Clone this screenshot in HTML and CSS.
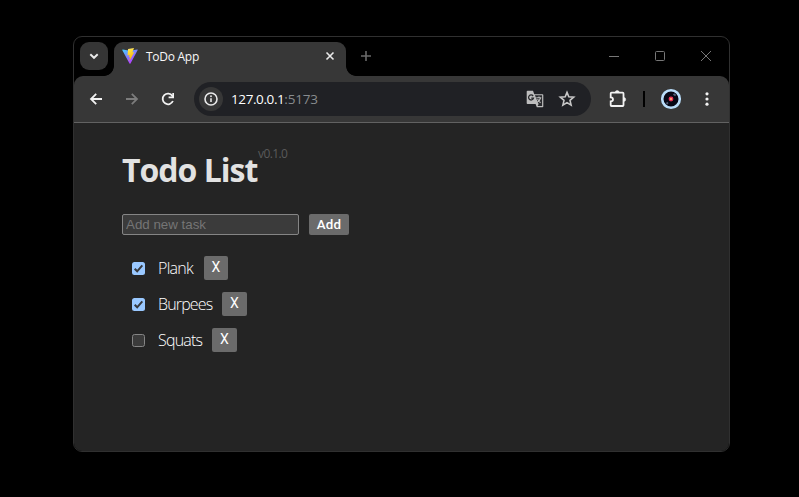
FILE: index.html
```html
<!DOCTYPE html>
<html lang="en">
<head>
<meta charset="utf-8">
<title>ToDo App</title>
<link rel="stylesheet" href="styles.css">
</head>
<body>
<div class="window">
  <div class="tabstrip">
    <div class="tab-search"><svg width="28" height="28" viewBox="0 0 28 28"><path d="M10.3 12.2l3.7 3.6 3.7-3.6" class="line bright w2"/></svg></div>
    <div class="tab">
      <svg class="favicon" width="16" height="16" viewBox="0 0 16 16">
        <defs>
          <linearGradient id="a" x1="0" y1="0" x2=".6" y2="1"><stop offset="0" stop-color="#41d1ff"/><stop offset="1" stop-color="#bd34fe"/></linearGradient>
          <linearGradient id="b" x1=".4" y1="0" x2=".6" y2="1"><stop offset="0" stop-color="#ffea83"/><stop offset=".2" stop-color="#ffdd35"/><stop offset="1" stop-color="#ffa800"/></linearGradient>
        </defs>
        <path d="M15.7 2.1L8.5 15.5Q8 16.2 7.5 15.5L.2 2.1Q.1 1.4.8 1.4L8 2.8l7.2-1.4q.7 0 .5.7z" fill="url(#a)"/>
        <path d="M12 0L6.1 1.1 5.5 7.4l2-.4-.6 2.5 1.2-.4-.8 4.1 5-9.2-2 .4z" fill="url(#b)"/>
      </svg>
      <span class="tab-title">ToDo App</span>
      <svg class="tab-close" width="16" height="16" viewBox="0 0 16 16"><path d="M4.5 4.5l7 7m0-7l-7 7" class="line bright w16"/></svg>
    </div>
    <svg class="new-tab" width="16" height="16" viewBox="0 0 16 16"><path d="M8 3v10M3 8h10" class="line dim w16"/></svg>
    <div class="controls">
      <svg width="46" height="28" viewBox="0 0 46 28"><path d="M18 14.5h10" class="line gray"/></svg>
      <svg width="46" height="28" viewBox="0 0 46 28"><rect x="18.5" y="9.5" width="9" height="9" rx="1" class="line gray"/></svg>
      <svg width="46" height="28" viewBox="0 0 46 28"><path d="M18 9l10 10m0-10L18 19" class="line gray"/></svg>
    </div>
  </div>
  <div class="toolbar">
    <svg width="36" height="36" viewBox="0 0 36 36"><path d="M24 18H13m5.2-5.2L13 18l5.2 5.2" class="line white w18"/></svg>
    <svg width="36" height="36" viewBox="0 0 36 36"><path d="M12 18h11m-5.2-5.2L23 18l-5.2 5.2" class="line muted w18"/></svg>
    <svg width="36" height="36" viewBox="0 0 36 36"><path d="M22.9 20a5.3 5.3 0 1 1-.5-5l.7 1" class="line white w18"/><path d="M24 12v5.2h-5.4v-1.7h3.7V12z" fill="#f2f2f2"/></svg>
    <div class="address">
      <div class="site-info"><svg width="24" height="24" viewBox="0 0 24 24"><circle cx="12" cy="12" r="6" class="line bright w16"/><path d="M12 11.3v3.7" class="line bright w16"/><circle cx="12" cy="9.2" r=".95" fill="#e3e3e3"/></svg></div>
      <div class="url"><span class="host">127.0.0.1</span><span class="port">:5173</span></div>
      <svg class="translate" width="18" height="18" viewBox="0 0 18 18">
        <path d="M1.5.8H7l1.3 3.4h8.2q.8 0 .8.8v11.5q0 .8-.8.8h-5.7L9.6 14H1.5q-.8 0-.8-.8V1.6q0-.8.8-.8z" fill="#bdbdbd"/>
        <path d="M8.9 5.3h7.2v10.8h-4.5l1-2.1L8.9 5.3z" fill="#292a2d"/>
        <path d="M7.1 6a2.5 2.5 0 1 0 .4 2.1H5.2" fill="none" stroke="#292a2d" stroke-width="1.3"/>
        <path d="M10.3 7.8h5M13 6.6v1.2M14.5 8q-.7 2.7-3 4m0-2.8l3 3.6" fill="none" stroke="#bdbdbd" stroke-width="1.1"/>
      </svg>
      <svg class="star" width="18" height="18" viewBox="0 0 18 18"><path d="M9 2.4l1.8 4.4 4.9.4-3.7 3.2 1.1 4.7L9 12.6l-4.1 2.5L6 10.4 2.3 7.2l4.9-.4z" class="line star-line"/></svg>
    </div>
    <svg class="extensions" width="36" height="36" viewBox="0 0 36 36"><path d="M11.6 11.7h11.1q.8 0 .8.8v11.7q0 .8-.8.8H11.5q-.8 0-.8-.8v-3.8q2.3-.2 2.3-2t-2.3-2v-3.9q0-.8.9-.8z" class="line white w18"/><path d="M15.2 11.5a2 2 0 0 1 4 0zM23.7 16.4a2 2 0 0 1 0 4z" fill="#f2f2f2" stroke="#f2f2f2" stroke-width=".5"/></svg>
    <div class="separator"></div>
    <svg class="avatar" width="36" height="36" viewBox="0 0 36 36"><circle cx="18" cy="18" r="8.8" fill="#070715" stroke="#b9ddfa" stroke-width="2.6"/><path d="M20.5 13l2.2 1.5M13.5 21.5l1.5 1.2" stroke="#536078" stroke-width="2"/><circle cx="18" cy="18" r="2.4" fill="#ed3455"/><circle cx="18" cy="18" r="1" fill="#ffc07c"/></svg>
    <svg width="36" height="36" viewBox="0 0 36 36" fill="#f2f2f2"><circle cx="18" cy="12.8" r="1.6"/><circle cx="18" cy="18" r="1.6"/><circle cx="18" cy="23.2" r="1.6"/></svg>
  </div>
  <main>
    <header><h1>Todo List</h1><span class="version">v0.1.0</span></header>
    <form class="add-form"><input type="text" placeholder="Add new task"><button type="button">Add</button></form>
    <ul>
      <li><span class="check checked"><svg width="13" height="13" viewBox="0 0 13 13"><path d="M2.7 6.7l2.5 2.6L10.3 3.3" class="tick"/></svg></span><span class="task plank">Plank</span><button type="button" class="narrow">X</button></li>
      <li><span class="check checked"><svg width="13" height="13" viewBox="0 0 13 13"><path d="M2.7 6.7l2.5 2.6L10.3 3.3" class="tick"/></svg></span><span class="task burpees">Burpees</span><button type="button">X</button></li>
      <li><span class="check"></span><span class="task squats">Squats</span><button type="button">X</button></li>
    </ul>
  </main>
</div>
</body>
</html>
```
FILE: styles.css
```css
* { box-sizing: border-box; }
body { margin: 0; padding: 36px 0 0 73px; height: 497px; background: #000; font-family: "Open Sans", sans-serif; overflow: hidden; }
svg { display: block; flex: none; }
.window { width: 657px; height: 416px; border: 1px solid #303030; border-radius: 9px; background: #000; overflow: hidden; display: flex; flex-direction: column; }
.line { fill: none; stroke-width: 1; }
.bright { stroke: #e9e9e9; }
.white { stroke: #f2f2f2; }
.dim { stroke: #696969; }
.gray { stroke: #777; }
.muted { stroke: #7c7c7c; }
.w16 { stroke-width: 1.6; }
.w18 { stroke-width: 1.8; }
.w2 { stroke-width: 1.9; }
.star-line { stroke: #c7c7c7; stroke-width: 1.6; }

.tabstrip { height: 39px; flex: none; padding: 5px 0 0 6px; display: flex; }
.tab-search { width: 28px; height: 28px; border-radius: 9px; background: #353535; margin-right: 6px; }
.tab { position: relative; width: 232px; height: 34px; padding: 0 8px 6px; border-radius: 9px 9px 0 0; background: #373737; display: flex; align-items: center; }
.tab::before, .tab::after { content: ""; position: absolute; bottom: 0; width: 10px; height: 10px; }
.tab::before { left: -10px; background: radial-gradient(circle at 0 0, transparent 9.5px, #373737 10.2px); }
.tab::after { right: -10px; background: radial-gradient(circle at 100% 0, transparent 9.5px, #373737 10.2px); }
.tab-title { margin-left: 8px; font-size: 12px; line-height: 16px; color: #f8f8f8; letter-spacing: -.27px; padding-top: 1px; }
.tab-close { margin-left: auto; }
.new-tab { margin: 6px 0 0 12px; }
.controls { margin-left: auto; display: flex; height: 28px; }

.toolbar { height: 47px; flex: none; padding: 0 0 0 4px; display: flex; align-items: center; background: #373737; border-bottom: 1px solid #626262; border-radius: 9px 9px 0 0; }
.address { width: 397px; height: 34px; margin-left: 8px; border-radius: 17px; background: #202125; display: flex; align-items: center; padding: 0 15px 0 5px; }
.site-info { width: 24px; height: 24px; border-radius: 50%; background: #373737; }
.url { margin-left: 8px; font-size: 13.5px; line-height: 18px; }
.host { color: #fff; letter-spacing: -.4px; }
.port { color: #878b8e; letter-spacing: -.2px; }
.translate { margin-left: auto; }
.star { margin-left: 14px; }
.extensions { margin-left: 9px; }
.separator { width: 2px; height: 16px; margin: 0 8px 0 7px; background: #000; }

main { flex: 1; background: #242424; padding: 23px 0 0 48px; color: #e2e2e2; }
header { display: flex; height: 68px; }
h1 { margin: 0; width: 136px; font-size: 32px; line-height: 47px; font-weight: 700; letter-spacing: -1px; white-space: nowrap; }
.version { font-size: 12px; line-height: 16px; color: #5a5a5a; letter-spacing: -.6px; }
.add-form { display: flex; gap: 10px; margin: 0; height: 21px; }
input { width: 177px; height: 21px; padding: 1px 3px; border: 1px solid #858585; border-radius: 2px; background: #3b3b3b; color: #eee; font: 13.333px "Liberation Sans", sans-serif; }
input::placeholder { color: #757575; }
button { border: 0; border-radius: 2px; background: #6b6b6b; color: #fff; padding: 0; }
.add-form button { width: 40px; font: 500 13.333px Roboto, sans-serif; letter-spacing: .15px; }
ul { list-style: none; margin: 21px 0 0; padding: 0 0 0 10px; display: flex; flex-direction: column; gap: 12px; }
li { display: flex; align-items: center; height: 24px; }
li button { width: 25px; height: 24px; font: 400 14px/22px Roboto, sans-serif; padding-bottom: 2px; }
li .narrow { width: 24px; }
.check { width: 13px; height: 13px; border-radius: 2.5px; border: 1px solid #858585; background: #3b3b3b; }
.checked { border: 0; background: #99c8ff; }
.tick { fill: none; stroke: #36393e; stroke-width: 2; }
.task { margin-left: 13px; font-size: 16px; line-height: 24px; font-weight: 300; color: #fff; white-space: nowrap; }
.plank { width: 46px; letter-spacing: -.7px; }
.burpees { width: 64px; letter-spacing: -.85px; }
.squats { width: 54px; letter-spacing: -.8px; }
```
